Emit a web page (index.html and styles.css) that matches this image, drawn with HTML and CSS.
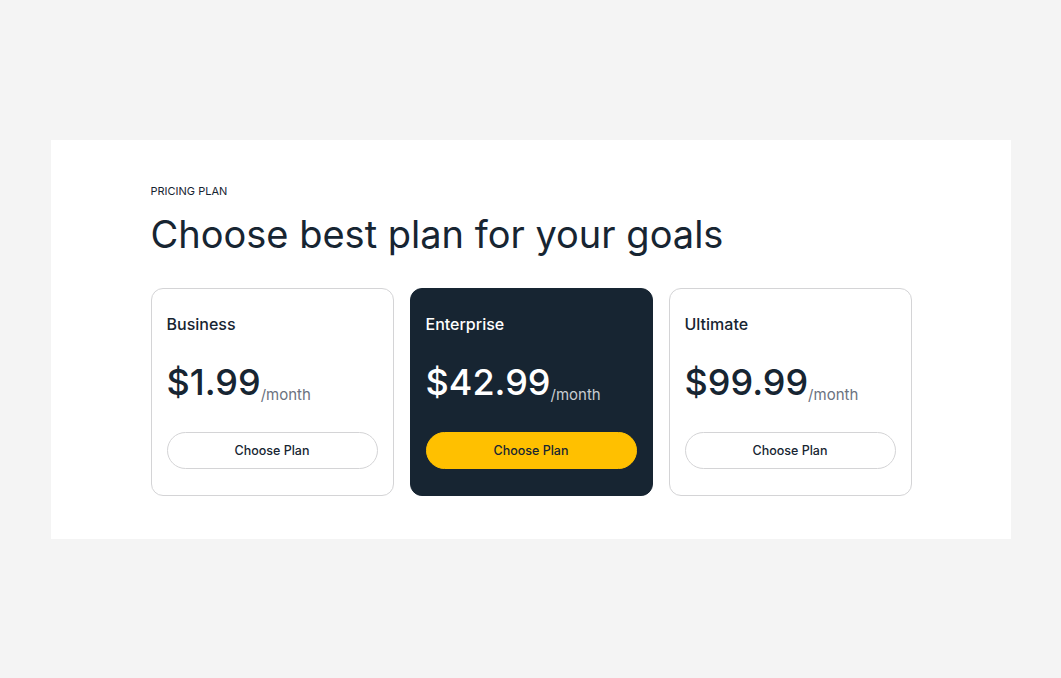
FILE: index.html
```html
<!DOCTYPE html>
<html>
<head>
<meta charset="utf-8">
<link rel="stylesheet" href="styles.css">
</head>
<body>
<section class="panel">
  <p class="eyebrow">PRICING PLAN</p>
  <h1 class="title">Choose best plan for your goals</h1>
  <div class="cards">
    <div class="card">
      <h2 class="plan">Business</h2>
      <div class="price"><span class="amount">$1.99</span><span class="per">/month</span></div>
      <button class="btn">Choose Plan</button>
    </div>
    <div class="card card-dark">
      <h2 class="plan">Enterprise</h2>
      <div class="price"><span class="amount">$42.99</span><span class="per">/month</span></div>
      <button class="btn btn-yellow">Choose Plan</button>
    </div>
    <div class="card">
      <h2 class="plan">Ultimate</h2>
      <div class="price"><span class="amount">$99.99</span><span class="per">/month</span></div>
      <button class="btn">Choose Plan</button>
    </div>
  </div>
</section>
</body>
</html>
```
FILE: styles.css
```css
* { box-sizing: border-box; }
html, body { margin: 0; padding: 0; }
body {
  background: #f4f4f4;
  min-height: 100vh;
  display: flex;
  align-items: center;
  justify-content: center;
  font-family: "Inter", "Noto Sans", sans-serif;
  color: #172532;
}
.panel {
  width: 960px;
  height: 399px;
  background: #ffffff;
  padding: 44px 100px 0 100px;
}
.eyebrow {
  margin: 0;
  font-size: 11px;
  line-height: 14px;
  letter-spacing: 0;
}
.title {
  margin: 12px 0 0 0;
  font-size: 38px;
  line-height: 48px;
  font-weight: 400;
  letter-spacing: 0;
}
.cards {
  display: flex;
  gap: 16px;
  margin-top: 30px;
  width: 761px;
}
.card {
  flex: 1;
  height: 208px;
  border: 1px solid #d4d4d6;
  border-radius: 12px;
  padding: 24px 15px 0 15px;
  display: flex;
  flex-direction: column;
}
.card-dark {
  background: #172532;
  border-color: #172532;
  color: #ffffff;
}
.plan {
  margin: 0;
  font-size: 16px;
  line-height: 22px;
  font-weight: 500;
}
.price {
  margin-top: 25px;
  height: 44px;
  white-space: nowrap;
}
.amount {
  font-size: 36px;
  line-height: 44px;
  font-weight: 500;
}
.per {
  font-size: 15px;
  color: #6b7280;
  margin-left: 0;
  vertical-align: -5px;
}
.card-dark .per { color: #c7ccd1; }
.btn {
  margin-top: 28px;
  width: 100%;
  height: 37px;
  border-radius: 999px;
  border: 1px solid #d4d4d6;
  background: #ffffff;
  font-family: inherit;
  font-size: 12.5px;
  font-weight: 500;
  color: #172532;
}
.btn-yellow {
  background: #ffc000;
  border-color: #ffc000;
}
```
